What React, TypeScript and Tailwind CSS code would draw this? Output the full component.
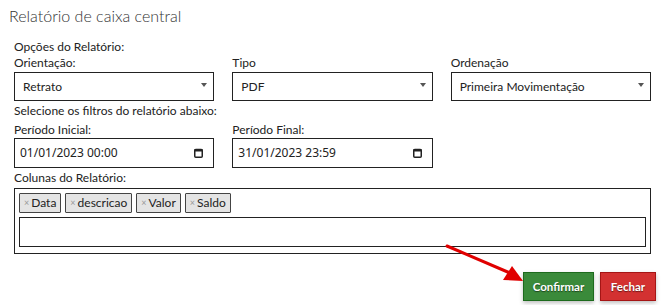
import React from 'react'

const FONT = "font-['Lato','Noto_Sans',sans-serif]"

function Label({ children, className = '' }: { children: React.ReactNode; className?: string }) {
  return <div className={`text-[12px] leading-[16px] text-[#222] ${className}`}>{children}</div>
}

function SelectBox({ value }: { value: string }) {
  return (
    <div className="relative flex h-[29px] items-center border border-[#222] bg-white pl-[8px] text-[12px] text-[#222]">
      <span>{value}</span>
      <svg className="absolute right-[6px] top-[10px]" width="6" height="4" viewBox="0 0 6 4">
        <path d="M0 0h6L3 4z" fill="#555" />
      </svg>
    </div>
  )
}

function DateBox({ value }: { value: string }) {
  return (
    <div className="relative flex h-[30px] items-center border border-[#222] bg-white pl-[5px] font-['Noto_Sans',sans-serif] text-[12px] text-[#222]">
      <span>{value}</span>
      <svg className="absolute right-[10px] top-[9px]" width="9" height="10" viewBox="0 0 9 10">
        <rect x="0.75" y="1.5" width="7.5" height="7.75" rx="1" fill="none" stroke="#222" strokeWidth="1.5" />
        <rect x="0.5" y="1" width="8" height="2.5" fill="#222" />
      </svg>
    </div>
  )
}

function Tag({ text }: { text: string }) {
  return (
    <span className="flex h-[20px] items-center gap-[2px] rounded-[1px] border border-[#444] bg-[#e4e4e4] px-[4px] text-[12px] text-[#222]">
      <span className="text-[9px] text-[#999]">×</span>
      {text}
    </span>
  )
}

export default function App() {
  return (
    <div className={`relative h-[305px] w-[668px] overflow-hidden bg-white ${FONT}`}>
      <h1 className="pl-[9px] pt-[4px] text-[16px] font-light leading-[24px] text-[#333]">
        Relatório de caixa central
      </h1>

      <div className="px-[14px] pr-[17px] pt-[11px]">
        <Label>Opções do Relatório:</Label>
        <div className="grid grid-cols-3 gap-x-[18px]">
          <div>
            <Label className="mb-[1px]">Orientação:</Label>
            <SelectBox value="Retrato" />
          </div>
          <div>
            <Label className="mb-[1px]">Tipo</Label>
            <SelectBox value="PDF" />
          </div>
          <div>
            <Label className="mb-[1px]">Ordenação</Label>
            <SelectBox value="Primeira Movimentação" />
          </div>
        </div>

        <Label className="mt-[2px]">Selecione os filtros do relatório abaixo:</Label>
        <div className="mt-[3px] grid grid-cols-3 gap-x-[18px]">
          <div>
            <Label>Período Inicial:</Label>
            <DateBox value="01/01/2023 00:00" />
          </div>
          <div>
            <Label>Período Final:</Label>
            <DateBox value="31/01/2023 23:59" />
          </div>
        </div>

        <Label className="mb-[2px] mt-[2px]">Colunas do Relatório:</Label>
        <div className="flex flex-col gap-[4px] border border-[#222] px-[4px] pb-[6px] pt-[4px]">
          <div className="flex gap-[4px]">
            <Tag text="Data" />
            <Tag text="descricao" />
            <Tag text="Valor" />
            <Tag text="Saldo" />
          </div>
          <div className="h-[30px] border border-[#222]" />
        </div>

        <div className="mr-[-5px] mt-[18px] flex justify-end gap-[6px]">
          <button className="h-[29px] w-[71px] border border-[#1d6a1d] bg-[#3a8a3a] text-[11.5px] font-bold text-white shadow-[0_2px_4px_rgba(0,0,0,0.25)] [text-shadow:0_1px_1px_rgba(0,0,0,0.5)]">
            Confirmar
          </button>
          <button className="h-[29px] w-[56px] border border-[#a51515] bg-[#d33131] text-[11.5px] font-bold text-white shadow-[0_2px_4px_rgba(0,0,0,0.25)] [text-shadow:0_1px_1px_rgba(0,0,0,0.5)]">
            Fechar
          </button>
        </div>
      </div>

      <svg className="pointer-events-none absolute left-0 top-0" width="668" height="305">
        <line x1="447" y1="246" x2="510" y2="273" stroke="#e00000" strokeWidth="3" strokeLinecap="round" />
        <polygon points="523,281 503,280 512,266" fill="#e00000" />
      </svg>
    </div>
  )
}
